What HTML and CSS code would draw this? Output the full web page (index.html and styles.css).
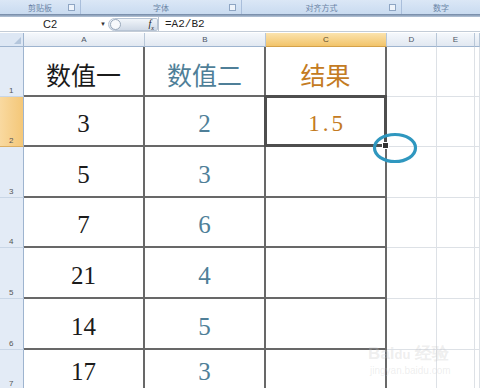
FILE: index.html
```html
<!DOCTYPE html>
<html lang="zh">
<head>
    <title>数值相除</title>
    <link rel="stylesheet" href="styles.css">
</head>
<body>
    <div class="window">
        <div class="ribbon">
            <div class="group g1">剪贴板<span class="launcher"></span></div>
            <div class="group g2">字体<span class="launcher"></span></div>
            <div class="group g3">对齐方式<span class="launcher"></span></div>
            <div class="group g4">数字</div>
        </div>
        <div class="strip"></div>
        <div class="formula-bar">
            <div class="name-box">C2</div>
            <div class="arrow">&#9660;</div>
            <div class="pill"><span class="knob"></span><span class="fx">f<sub>x</sub></span></div>
            <div class="formula">=A2/B2</div>
        </div>

        <div class="sheet">
            <!-- column headers -->
            <div class="corner"></div>
            <div class="col-head">A</div>
            <div class="col-head">B</div>
            <div class="col-head active">C</div>
            <div class="col-head">D</div>
            <div class="col-head">E</div>
            <div class="col-head"></div>

            <div class="row-head">1</div>
            <div class="cell title">数值一</div>
            <div class="cell title blue">数值二</div>
            <div class="cell title orange">结果</div>
            <div class="grid"></div><div class="grid"></div><div class="grid"></div>

            <div class="row-head active">2</div>
            <div class="cell num">3</div>
            <div class="cell num blue">2</div>
            <div class="cell num orange selected"><span class="result">1.5</span></div>
            <div class="grid"></div><div class="grid"></div><div class="grid"></div>

            <div class="row-head">3</div>
            <div class="cell num">5</div>
            <div class="cell num blue">3</div>
            <div class="cell"></div>
            <div class="grid"></div><div class="grid"></div><div class="grid"></div>

            <div class="row-head">4</div>
            <div class="cell num">7</div>
            <div class="cell num blue">6</div>
            <div class="cell"></div>
            <div class="grid"></div><div class="grid"></div><div class="grid"></div>

            <div class="row-head">5</div>
            <div class="cell num">21</div>
            <div class="cell num blue">4</div>
            <div class="cell"></div>
            <div class="grid"></div><div class="grid"></div><div class="grid"></div>

            <div class="row-head">6</div>
            <div class="cell num">14</div>
            <div class="cell num blue">5</div>
            <div class="cell"></div>
            <div class="grid"></div><div class="grid"></div><div class="grid"></div>

            <div class="row-head">7</div>
            <div class="cell num">17</div>
            <div class="cell num blue">3</div>
            <div class="cell"></div>
            <div class="grid"></div><div class="grid"></div><div class="grid"></div>
        </div>

        <!-- annotation circle around the fill handle -->
        <svg class="mark" width="48" height="34" viewBox="0 0 48 34">
            <ellipse cx="24" cy="17" rx="20.5" ry="13.5" fill="none" stroke="#2f97bf" stroke-width="3.2"/>
        </svg>

        <div class="watermark">
            <div class="wm-top">Bai<span class="du">du</span> 经验</div>
            <div class="wm-url">jingyan.baidu.com</div>
        </div>
    </div>
</body>
</html>
```

FILE: styles.css
```css
body {
    margin: 0;
    padding: 0;
    background-color: #ffffff;
    font-family: "Liberation Sans", Arial, sans-serif;
}

.window {
    position: relative;
    width: 480px;
    height: 388px;
    overflow: hidden;
}

/* ribbon group labels */
.ribbon {
    display: flex;
    height: 14px;
    background: linear-gradient(#dbe7f6, #c9dbf0);
}

.group {
    position: relative;
    display: flex;
    align-items: center;
    justify-content: center;
    font-family: "Noto Sans CJK SC", sans-serif;
    font-size: 8px;
    color: #6a84a6;
    border-right: 1px solid #a9bedb;
    box-sizing: border-box;
}

.g1 { width: 81px; }
.g2 { width: 161px; }
.g3 { width: 160px; }
.g4 { flex: 1; border-right: none; }

.launcher {
    position: absolute;
    right: 5px;
    top: 4px;
    width: 5px;
    height: 5px;
    border: 1px solid #8ea5c3;
    background-color: #eef3fa;
}

.strip {
    height: 3px;
    background: linear-gradient(#6f86a3, #b8c7da);
}

/* formula bar */
.formula-bar {
    display: flex;
    align-items: center;
    height: 14px;
    border-bottom: 1px solid #c3ccd7;
    margin-bottom: 1px;
    font-size: 11px;
    color: #222;
}

.name-box {
    width: 100px;
    text-align: center;
}

.arrow {
    width: 8px;
    font-size: 6px;
    color: #333;
}

.pill {
    display: flex;
    align-items: center;
    justify-content: space-between;
    width: 50px;
    height: 13px;
    border-radius: 7px 2px 2px 7px;
    background: linear-gradient(#f1f5fa, #cfd9e6);
    border: 1px solid #b7c4d4;
    box-sizing: border-box;
}

.knob {
    width: 9px;
    height: 9px;
    margin-left: 1px;
    border-radius: 50%;
    border: 1px solid #9aa9bb;
    background-color: #f7f9fc;
}

.fx {
    font-family: "Liberation Serif", serif;
    font-style: italic;
    font-size: 10px;
    margin-right: 3px;
}

.fx sub {
    font-size: 6px;
}

.formula {
    flex: 1;
    padding-left: 6px;
    border-left: 1px solid #b9c4d2;
    font-family: "Liberation Mono", monospace;
    font-size: 11px;
    height: 14px;
    line-height: 14px;
}

/* sheet grid */
.sheet {
    display: grid;
    grid-template-columns: 24px 121px 121px 121px 50px 38px 5px;
    grid-template-rows: 14px 50px 50px 51px 50px 51px 51px 40px;
}

.corner {
    position: relative;
    background-color: #dde7f4;
    border-right: 1px solid #9eb4cf;
    border-bottom: 1px solid #9eb4cf;
    box-sizing: border-box;
}

.corner::after {
    content: "";
    position: absolute;
    right: 2px;
    bottom: 2px;
    border-left: 7px solid transparent;
    border-bottom: 7px solid #b4c6dc;
}

.col-head {
    display: flex;
    align-items: center;
    justify-content: center;
    font-size: 8px;
    color: #4b5563;
    background: linear-gradient(#f5f8fc, #e1e8f1);
    border-right: 1px solid #b8c7d8;
    border-bottom: 1px solid #9eb4cf;
    box-sizing: border-box;
}

.col-head.active {
    background: linear-gradient(#fbe3ae, #f2c46a);
    border-bottom-color: #d4a24a;
    color: #5a4a2a;
}

.row-head {
    display: flex;
    align-items: flex-end;
    padding: 0 0 1px 9px;
    font-size: 8px;
    color: #555;
    background-color: #e3ebf6;
    border-right: 1px solid #9eb4cf;
    border-bottom: 1px solid #c9d6e6;
    box-sizing: border-box;
}

.row-head.active {
    background: linear-gradient(90deg, #f9d9a0, #f4c778);
    border-bottom-color: #dcae62;
}

.cell {
    display: flex;
    align-items: center;
    justify-content: center;
    border-right: 2px solid #686868;
    border-bottom: 2px solid #686868;
    box-sizing: border-box;
    color: #1b1b1b;
}

.grid {
    border-right: 1px solid #dde1e6;
    border-bottom: 1px solid #dde1e6;
    box-sizing: border-box;
}

.title {
    font-family: "Noto Sans CJK SC", sans-serif;
    font-size: 25px;
    padding-top: 5px;
}

.num {
    font-family: "Liberation Serif", "Times New Roman", serif;
    font-size: 25px;
    padding-top: 6px;
}

.blue {
    color: #4f7f98;
}

.orange {
    color: #c47b22;
}

.result {
    letter-spacing: 3px;
    font-size: 23px;
    padding-left: 3px;
}

.selected {
    position: relative;
}

.selected::after {
    content: "";
    position: absolute;
    left: -2px;
    top: -2px;
    right: -2px;
    bottom: -2px;
    border: 3px solid #4e4e4e;
}

.selected::before {
    content: "";
    position: absolute;
    right: -4px;
    bottom: -4px;
    width: 5px;
    height: 5px;
    background-color: #333;
    border: 1px solid #fff;
    z-index: 1;
}

.mark {
    position: absolute;
    left: 371px;
    top: 131px;
}

.watermark {
    position: absolute;
    left: 368px;
    top: 344px;
    color: rgba(200, 200, 200, 0.3);
    font-family: "Liberation Sans", Arial, sans-serif;
}

.wm-top {
    font-size: 17px;
    font-weight: bold;
    line-height: 20px;
}

.wm-top .du {
    font-size: 13px;
}

.wm-url {
    font-size: 10px;
    line-height: 12px;
    padding-left: 2px;
}
```
